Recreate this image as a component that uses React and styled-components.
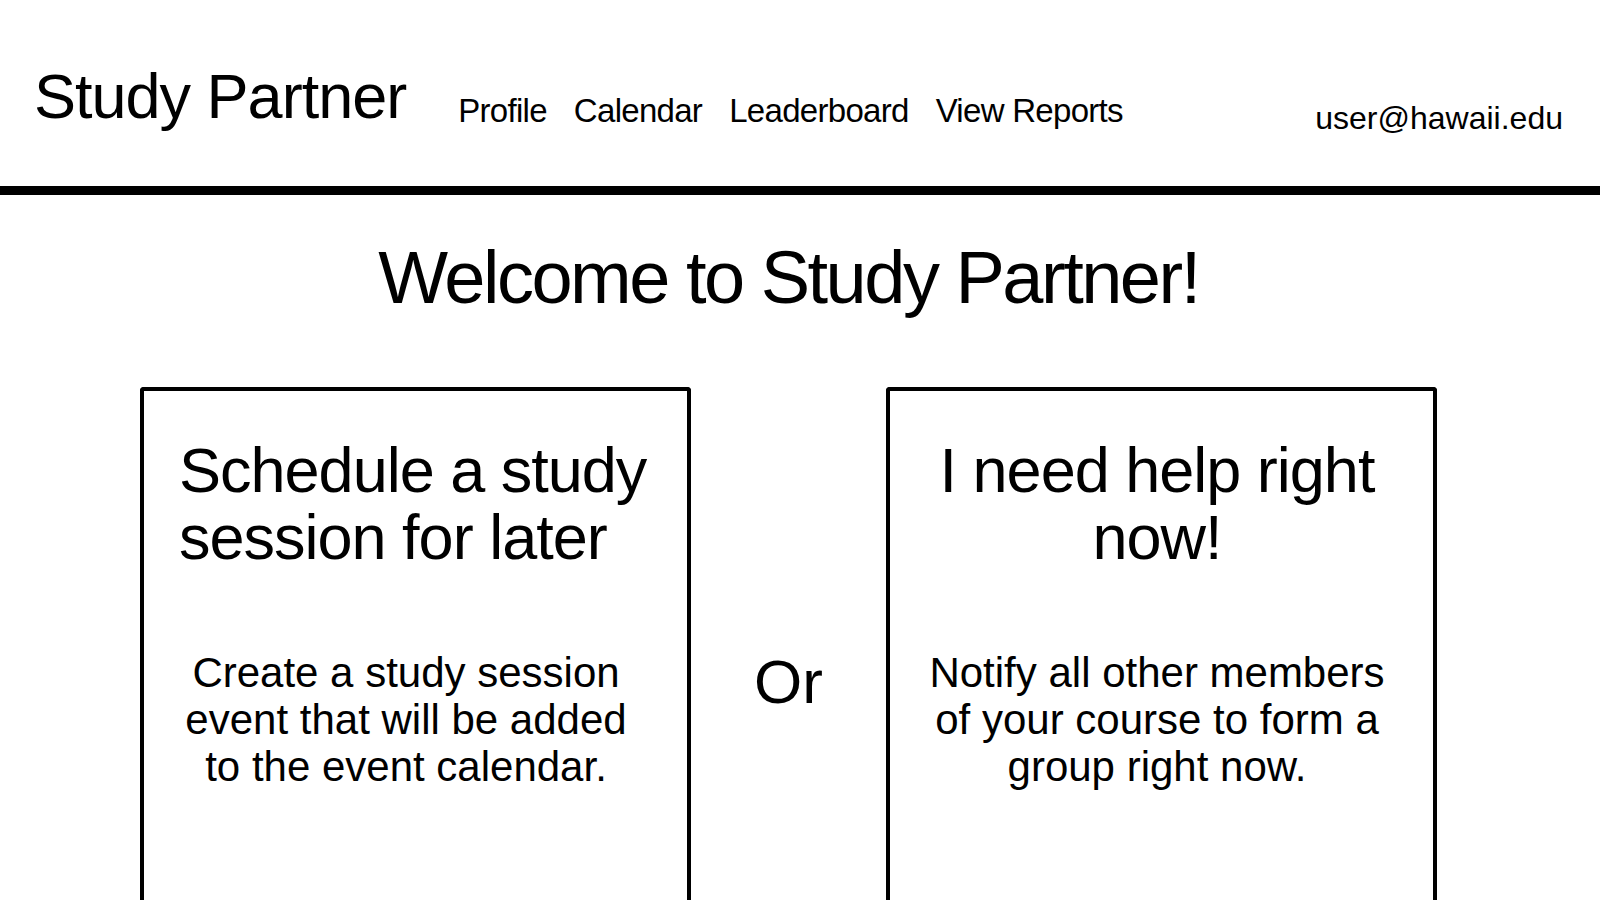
import React from 'react';
import styled, { createGlobalStyle } from 'styled-components';

const GlobalStyle = createGlobalStyle`
  html, body {
    margin: 0;
    padding: 0;
    overflow: hidden;
    background: #fff;
  }
  body {
    font-family: "Liberation Sans", Arial, sans-serif;
    color: #000;
  }
`;

const Header = styled.header`
  display: flex;
  align-items: flex-start;
  height: 186px;
  padding: 0 37px 0 34px;
  box-sizing: border-box;
`;

const Brand = styled.div`
  margin-top: 65px;
  font-size: 63px;
  line-height: 63px;
  letter-spacing: -1px;
  white-space: nowrap;
`;

const Nav = styled.nav`
  display: flex;
  gap: 27px;
  margin: 94px 0 0 52px;
`;

const NavLink = styled.a`
  font-size: 33px;
  line-height: 33px;
  letter-spacing: -0.7px;
  color: #000;
  text-decoration: none;
  white-space: nowrap;
`;

const UserEmail = styled.div`
  margin: 102px 0 0 auto;
  font-size: 32px;
  line-height: 32px;
`;

const Rule = styled.div`
  height: 9px;
  background: #000;
`;

const Main = styled.main`
  padding-right: 23px;
`;

const Welcome = styled.h1`
  margin: 46px 0 0;
  font-size: 74px;
  line-height: 74px;
  font-weight: 400;
  letter-spacing: -2.5px;
  text-align: center;
`;

const Choices = styled.section`
  display: flex;
  justify-content: center;
  margin-top: 72px;
`;

const Card = styled.div`
  flex-shrink: 0;
  width: 551px;
  height: 600px;
  box-sizing: border-box;
  border: 4px solid #000;
  border-bottom: none;
  border-radius: 4px 4px 0 0;
  padding: 46px 44px 0 35px;
`;

const CardTitle = styled.h2`
  margin: 0;
  font-size: 63px;
  line-height: 67px;
  font-weight: 400;
  letter-spacing: -1px;
  white-space: nowrap;
  text-align: ${(p) => p.$align};
`;

const CardText = styled.p`
  margin: 78px 0 0;
  padding-right: ${(p) => p.$inset || 0}px;
  font-size: 42px;
  line-height: 47px;
  text-align: center;
  white-space: nowrap;
`;

const OrLabel = styled.div`
  flex-shrink: 0;
  width: 195px;
  padding-top: 264px;
  font-size: 62px;
  line-height: 62px;
  text-align: center;
`;

const navItems = ['Profile', 'Calendar', 'Leaderboard', 'View Reports'];

export default function App() {
  return (
    <>
      <GlobalStyle />
      <Header>
        <Brand>Study Partner</Brand>
        <Nav>
          {navItems.map((label) => (
            <NavLink key={label} href="#">
              {label}
            </NavLink>
          ))}
        </Nav>
        <UserEmail>user@hawaii.edu</UserEmail>
      </Header>
      <Rule />
      <Main>
        <Welcome>Welcome to Study Partner!</Welcome>
        <Choices>
          <Card>
            <CardTitle $align="left">
              Schedule a study
              <br />
              session for later
            </CardTitle>
            <CardText $inset={10}>
              Create a study session
              <br />
              event that will be added
              <br />
              to the event calendar.
            </CardText>
          </Card>
          <OrLabel>Or</OrLabel>
          <Card>
            <CardTitle $align="center">
              I need help right
              <br />
              now!
            </CardTitle>
            <CardText>
              Notify all other members
              <br />
              of your course to form a
              <br />
              group right now.
            </CardText>
          </Card>
        </Choices>
      </Main>
    </>
  );
}
